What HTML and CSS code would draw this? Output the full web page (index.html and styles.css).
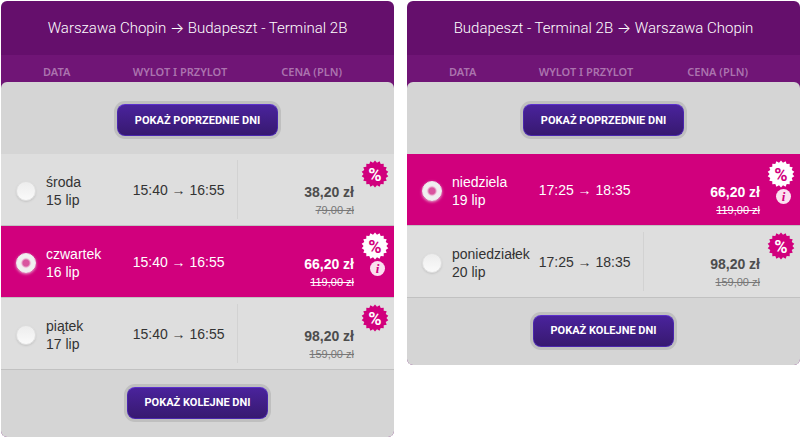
FILE: index.html
```html
<!DOCTYPE html>
<html lang="pl">
<head>
    <meta charset="UTF-8">
    <meta name="viewport" content="width=device-width, initial-scale=1.0">
    <title>Wybór lotu</title>
    <link rel="stylesheet" href="styles.css">
</head>
<body>
    <!-- shared badge shape -->
    <svg class="sprite" aria-hidden="true">
        <symbol id="promo" viewBox="0 0 28 28">
            <path fill="currentColor" d="M14 .5L16 2.8L18.6 1.3L19.7 4.1L22.7 3.7L22.7 6.7L25.7 7.2L24.7 10.1L27.3 11.7L25.4 14L27.3 16.3L24.7 17.9L25.7 20.8L22.7 21.3L22.7 24.3L19.7 23.9L18.6 26.7L16 25.2L14 27.5L12 25.2L9.4 26.7L8.3 23.9L5.3 24.3L5.3 21.3L2.3 20.8L3.3 17.9L.7 16.3L2.6 14L.7 11.7L3.3 10.1L2.3 7.2L5.3 6.7L5.3 3.7L8.3 4.1L9.4 1.3L12 2.8Z"/>
        </symbol>
    </svg>

    <main class="flights">
        <section class="panel">
            <h2 class="route">Warszawa Chopin → Budapeszt - Terminal 2B</h2>
            <table class="days">
                <thead>
                    <tr>
                        <th class="col-date">Data</th>
                        <th class="col-time">Wylot i przylot</th>
                        <th class="col-price">Cena (PLN)</th>
                    </tr>
                </thead>
                <tbody>
                    <tr class="more prev">
                        <td colspan="3"><button type="button" class="btn">Pokaż poprzednie dni</button></td>
                    </tr>
                    <tr class="flight">
                        <td>
                            <label class="date"><input type="radio" name="out"><span>środa<br>15 lip</span></label>
                        </td>
                        <td class="time">15:40 → 16:55</td>
                        <td class="price-cell">
                            <div class="price"><strong>38,20 zł</strong><del>79,00 zł</del></div>
                            <div class="badge"><svg><use href="#promo"/></svg><span>%</span></div>
                        </td>
                    </tr>
                    <tr class="flight selected">
                        <td>
                            <label class="date"><input type="radio" name="out" checked><span>czwartek<br>16 lip</span></label>
                        </td>
                        <td class="time">15:40 → 16:55</td>
                        <td class="price-cell">
                            <div class="price"><strong>66,20 zł</strong><del>119,00 zł</del></div>
                            <div class="badge"><svg><use href="#promo"/></svg><span>%</span></div>
                            <button type="button" class="info">i</button>
                        </td>
                    </tr>
                    <tr class="flight">
                        <td>
                            <label class="date"><input type="radio" name="out"><span>piątek<br>17 lip</span></label>
                        </td>
                        <td class="time">15:40 → 16:55</td>
                        <td class="price-cell">
                            <div class="price"><strong>98,20 zł</strong><del>159,00 zł</del></div>
                            <div class="badge"><svg><use href="#promo"/></svg><span>%</span></div>
                        </td>
                    </tr>
                    <tr class="more next">
                        <td colspan="3"><button type="button" class="btn">Pokaż kolejne dni</button></td>
                    </tr>
                </tbody>
            </table>
        </section>

        <section class="panel">
            <h2 class="route">Budapeszt - Terminal 2B → Warszawa Chopin</h2>
            <table class="days">
                <thead>
                    <tr>
                        <th class="col-date">Data</th>
                        <th class="col-time">Wylot i przylot</th>
                        <th class="col-price">Cena (PLN)</th>
                    </tr>
                </thead>
                <tbody>
                    <tr class="more prev">
                        <td colspan="3"><button type="button" class="btn">Pokaż poprzednie dni</button></td>
                    </tr>
                    <tr class="flight selected">
                        <td>
                            <label class="date"><input type="radio" name="back" checked><span>niedziela<br>19 lip</span></label>
                        </td>
                        <td class="time">17:25 → 18:35</td>
                        <td class="price-cell">
                            <div class="price"><strong>66,20 zł</strong><del>119,00 zł</del></div>
                            <div class="badge"><svg><use href="#promo"/></svg><span>%</span></div>
                            <button type="button" class="info">i</button>
                        </td>
                    </tr>
                    <tr class="flight">
                        <td>
                            <label class="date"><input type="radio" name="back"><span>poniedziałek<br>20 lip</span></label>
                        </td>
                        <td class="time">17:25 → 18:35</td>
                        <td class="price-cell">
                            <div class="price"><strong>98,20 zł</strong><del>159,00 zł</del></div>
                            <div class="badge"><svg><use href="#promo"/></svg><span>%</span></div>
                        </td>
                    </tr>
                    <tr class="more next">
                        <td colspan="3"><button type="button" class="btn">Pokaż kolejne dni</button></td>
                    </tr>
                </tbody>
            </table>
        </section>
    </main>
</body>
</html>
```
FILE: styles.css
```css
* {
    box-sizing: border-box;
}

body {
    margin: 0;
    padding: 1px 0 0 1px;
    background: #fff;
    font-family: "Liberation Sans", Arial, sans-serif;
    font-size: 14px;
    line-height: 18px;
    color: #333;
}

.sprite {
    display: none;
}

.flights {
    display: flex;
    align-items: flex-start;
    gap: 13px;
}

.panel {
    flex: 1;
    min-width: 0;
    border-radius: 6px;
    overflow: hidden;
}

.route {
    margin: 0;
    padding: 16px 0;
    background: #650f6c;
    color: #fff;
    font-family: Roboto, Inter, sans-serif;
    font-size: 15px;
    font-weight: 300;
    line-height: 22px;
    text-align: center;
    white-space: nowrap;
}

.days {
    width: 100%;
    table-layout: fixed;
    border-spacing: 0;
    background: #701576;
}

.days th,
.days td {
    padding: 0;
}

.days th {
    height: 27px;
    padding-top: 7px;
    color: #ab73ae;
    font-family: "Noto Sans", sans-serif;
    font-size: 11px;
    font-weight: 600;
    line-height: 20px;
    text-align: left;
    text-transform: uppercase;
    white-space: nowrap;
}

.days .col-date {
    width: 33%;
    padding-left: 42px;
}

.days .col-time {
    width: 27%;
}

.days .col-time,
.days .time {
    padding-left: 2px;
}

.days .col-price {
    padding-right: 52px;
    text-align: right;
}

/* rows with the buttons */
.more td {
    background: #d5d5d5;
    text-align: center;
}

.prev td {
    height: 72px;
    padding-top: 4px;
    border-radius: 6px 6px 0 0;
}

.next td {
    height: 67px;
    padding-bottom: 2px;
}

.btn {
    height: 32px;
    padding: 0 17px;
    border: 1px solid #4a26ad;
    border-top-color: #5c30cc;
    border-radius: 8px;
    background: linear-gradient(#4a239c, #371970);
    box-shadow: 0 0 0 3px #bfbfbf;
    color: #fff;
    font-family: Roboto, "Noto Sans", sans-serif;
    font-size: 11px;
    font-weight: 700;
    text-transform: uppercase;
}

/* flights */
.flight td {
    height: 72px;
    background: #dedede;
    border-bottom: 1px solid #c1c1c1;
}

.flight.selected td {
    background: #d1007d;
    color: #fff;
}

.date {
    display: flex;
    align-items: center;
    gap: 10px;
    padding: 2px 0 0 15px;
}

.date input {
    flex: none;
    appearance: none;
    width: 20px;
    height: 20px;
    margin: 0;
    border: 1px solid #dedede;
    border-radius: 50%;
    background: linear-gradient(#ededed, #fafafa);
    box-shadow: 0 1px 2px #c4c4c4;
}

.date input:checked {
    border-color: #eee;
    background: radial-gradient(circle, #d9559f 3px, #f3e4ec 5px, #f0f0f0 6px);
    box-shadow: 0 1px 3px #e9b4d2;
}

.time {
    white-space: nowrap;
}

.price-cell {
    position: relative;
}

.price {
    height: 59px;
    padding: 23px 40px 0 0;
    border-left: 1px solid #d2d2d2;
    text-align: right;
}

.selected .price {
    border-color: transparent;
}

.price strong,
.price del {
    display: block;
}

.price strong {
    color: #4d4d4d;
}

.price del {
    color: #777;
    font-size: 11px;
}

.selected .price strong,
.selected .price del {
    color: #fff;
}

.badge {
    position: absolute;
    top: 6px;
    right: 5px;
    width: 28px;
    height: 28px;
    color: #d1007d;
}

.badge svg {
    display: block;
    width: 28px;
    height: 28px;
}

.badge span {
    position: absolute;
    inset: 0;
    color: #fff;
    font-family: Roboto, sans-serif;
    font-size: 18px;
    font-weight: 700;
    line-height: 29px;
    text-align: center;
}

.selected .badge {
    color: #fff;
}

.selected .badge span {
    color: #d1007d;
}

.info {
    position: absolute;
    top: 35px;
    right: 9px;
    width: 15px;
    height: 15px;
    padding: 0;
    border: 0;
    border-radius: 50%;
    background: #fae0ef;
    color: #d1007d;
    font-family: "Liberation Serif", serif;
    font-size: 13px;
    font-style: italic;
    font-weight: 700;
    line-height: 14px;
    text-align: center;
}
```
